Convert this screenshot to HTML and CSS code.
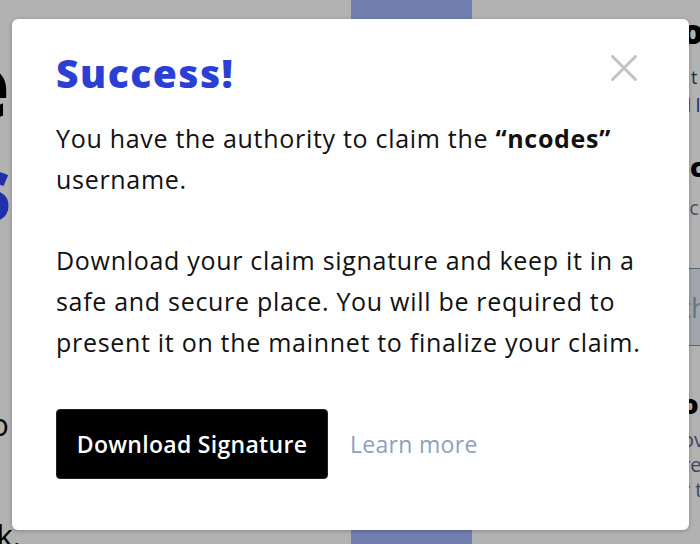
FILE: index.html
```html
<!DOCTYPE html>
<html>
<head>
<meta charset="utf-8">
<link rel="stylesheet" href="styles.css">
</head>
<body>
<div class="page">
  <div class="left-col">
    <div class="big-e">e</div>
    <div class="big-s">s</div>
    <div class="frag-o">o</div>
    <div class="frag-k">k.</div>
  </div>
  <div class="center-col">
    <div class="bar"></div>
  </div>
  <div class="right-col">
    <div class="r-o">o</div>
    <div class="r-t">t</div>
    <div class="r-d">d l</div>
    <div class="r-c">c</div>
    <div class="r-rc">rc</div>
    <div class="r-box">th</div>
    <div class="r-o2">o</div>
    <div class="r-small first">ov</div>
    <div class="r-small">re</div>
    <div class="r-small">r t</div>
  </div>
</div>
<div class="overlay"></div>
<div class="modal">
  <div class="modal-head">
    <h1 class="title">Success!</h1>
    <button class="close" aria-label="Close">
      <svg width="26" height="26" viewBox="0 0 26 26"><path d="M1.5 1.5 L24.5 24.5 M24.5 1.5 L1.5 24.5" stroke="#c2c2c2" stroke-width="3" stroke-linecap="round" fill="none"/></svg>
    </button>
  </div>
  <p class="text">You have the authority to claim the <strong>“ncodes”</strong> username.</p>
  <p class="text">Download your claim signature and keep it in a safe and secure place. You will be required to present it on the mainnet to finalize your claim.</p>
  <div class="actions">
    <button class="download">Download Signature</button>
    <a class="learn" href="#">Learn more</a>
  </div>
</div>
</body>
</html>
```
FILE: styles.css
```css
html, body {
  margin: 0;
  padding: 0;
  width: 700px;
  height: 544px;
  overflow: hidden;
  background: #ffffff;
  font-family: "Open Sans", "Noto Sans", sans-serif;
}
.page {
  display: flex;
  height: 544px;
}
.left-col {
  width: 60px;
  margin-left: -48px;
  display: flex;
  flex-direction: column;
  align-items: flex-end;
}
.big-e {
  font-size: 88px;
  font-weight: 800;
  line-height: 1;
  margin-top: 40px;
  color: #000;
  margin-right: 2px;
}
.big-s {
  font-size: 88px;
  font-weight: 800;
  line-height: 1;
  margin-top: 15px;
  color: #2f46ee;
  margin-right: 0;
}
.frag-o {
  font-size: 31px;
  line-height: 1;
  margin-top: 178px;
  color: #111;
  margin-right: 3px;
}
.frag-k {
  font-size: 31px;
  line-height: 1;
  margin-top: 80px;
  color: #000;
  margin-right: -9px;
}
.center-col {
  width: 121px;
  margin-left: 339px;
}
.bar {
  height: 544px;
  background: #a1b7fb;
}
.right-col {
  width: 60px;
  margin-left: auto;
  margin-right: -50px;
  display: flex;
  flex-direction: column;
  padding-top: 14px;
  color: #1f2d4a;
}
.r-o { font-size: 34px; font-weight: 800; line-height: 1; color: #000; margin-left: -8px; }
.r-t { font-size: 18px; line-height: 1; margin-top: 20px; margin-left: 1px; color: #2b3b63; }
.r-d { font-size: 18px; line-height: 1; margin-top: 10px; margin-left: -10px; color: #2b3b63; }
.r-c { font-size: 26px; font-weight: 800; line-height: 1; margin-top: 40px; color: #000; margin-left: 0; }
.r-rc { font-size: 20px; line-height: 1; margin-top: 18px; margin-left: -9px; color: #6b7a99; }
.r-box {
  margin-top: 50px;
  height: 76px;
  border: 1px solid #8091ad;
  background: #e8edf5;
  color: #9aa6bd;
  font-size: 28px;
  line-height: 76px;
  margin-left: -20px;
  padding-left: 10px;
}
.r-o2 { font-size: 26px; font-weight: 800; line-height: 1; margin-top: 45px; color: #000; margin-left: -8px; }
.r-small { font-size: 20px; line-height: 25px; margin-left: -8px; color: #59667f; }
.r-small.first { margin-top: 10px; }
.overlay {
  position: absolute;
  inset: 0;
  background: rgba(0, 0, 0, 0.3);
}
.modal {
  position: absolute;
  left: 12px;
  top: 19px;
  width: 677px;
  height: 511px;
  box-sizing: border-box;
  background: #fff;
  border-radius: 6px;
  padding: 30px 44px 0 44px;
  box-shadow: 0 1px 4px rgba(0,0,0,0.25);
}
.modal-head {
  display: flex;
  justify-content: space-between;
  align-items: flex-start;
}
.title {
  margin: 0;
  font-size: 39px;
  font-weight: 800;
  color: #2b3fd4;
  line-height: 48px;
  letter-spacing: 1.5px;
}
.close {
  border: 0;
  background: none;
  padding: 0;
  margin: 6px 8px 0 0;
  width: 26px;
  height: 26px;
  cursor: pointer;
}
.text {
  margin: 21px 0 40px 0;
  font-size: 25px;
  line-height: 41px;
  color: #111;
  letter-spacing: 0.7px;
}
.text + .text { margin-top: 0; margin-bottom: 46px; }
.text strong { font-weight: 700; }
.actions {
  display: flex;
  align-items: center;
  gap: 22px;
}
.download {
  background: #000;
  color: #fff;
  border: 1px solid #222;
  border-radius: 4px;
  width: 272px;
  height: 70px;
  font-family: inherit;
  font-size: 23px;
  font-weight: 600;
  letter-spacing: 0.3px;
  cursor: pointer;
}
.learn {
  color: #8ea0bf;
  font-size: 23px;
  letter-spacing: 0.3px;
  text-decoration: none;
}
```
